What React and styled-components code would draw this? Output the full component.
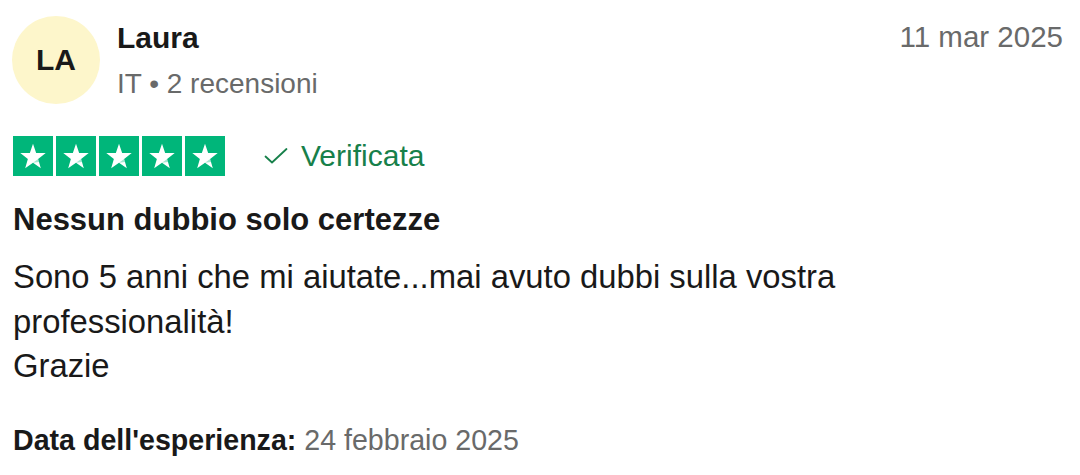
import React from 'react';
import styled, { createGlobalStyle } from 'styled-components';

const GlobalStyle = createGlobalStyle`
  html, body {
    margin: 0;
    padding: 0;
    background: #ffffff;
  }
  body {
    font-family: "Liberation Sans", Arial, Helvetica, sans-serif;
    color: #191919;
  }
`;

const Card = styled.article`
  width: 1080px;
  height: 475px;
  box-sizing: border-box;
  padding: 16px 17px 0 13px;
  display: flex;
  flex-direction: column;
`;

const Header = styled.header`
  display: flex;
  align-items: flex-start;
`;

const Avatar = styled.div`
  width: 88px;
  height: 88px;
  margin-left: -1px;
  border-radius: 50%;
  background: #fdf6cb;
  display: flex;
  align-items: center;
  justify-content: center;
  font-size: 30px;
  font-weight: 700;
  color: #191919;
  flex-shrink: 0;
`;

const Consumer = styled.div`
  display: flex;
  flex-direction: column;
  margin-left: 17px;
  flex: 1;
`;

const Name = styled.div`
  margin-top: 6px;
  font-size: 30px;
  line-height: 32px;
  font-weight: 700;
`;

const Meta = styled.div`
  margin-top: 14px;
  font-size: 28px;
  line-height: 32px;
  color: #696a6a;
`;

const PostedAt = styled.time`
  margin-top: 5px;
  font-size: 29.5px;
  line-height: 32px;
  color: #696a6a;
`;

const RatingRow = styled.div`
  display: flex;
  align-items: center;
  margin-top: 32px;
`;

const Stars = styled.div`
  display: flex;
  gap: 3px;
`;

const StarBox = styled.div`
  width: 40px;
  height: 40px;
  background: ${(p) => (p.$on ? '#00b67a' : '#dcdce6')};
  display: flex;
  align-items: center;
  justify-content: center;
`;

const Verified = styled.div`
  display: flex;
  align-items: center;
  margin-left: 39px;
  color: #17804a;
  font-size: 30px;
  line-height: 32px;
  gap: 13px;
`;

const Title = styled.h2`
  margin: 28px 0 0;
  font-size: 31px;
  line-height: 32px;
  font-weight: 700;
`;

const Body = styled.p`
  margin: 19px 0 0;
  font-size: 32.8px;
  line-height: 44.5px;
  max-width: 900px;
`;

const Experience = styled.p`
  margin: 35px 0 0;
  font-size: 28.6px;
  line-height: 32px;
  color: #696a6a;

  strong {
    color: #191919;
    font-weight: 700;
  }
`;

const Star = () => (
  <svg width="28" height="28" viewBox="0 0 24 24">
    <path
      d="M12 1.6 L14.7 9.4 L22.9 9.5 L16.4 14.5 L18.7 22.4 L12 17.7 L5.3 22.4 L7.6 14.5 L1.1 9.5 L9.3 9.4 Z"
      fill="#ffffff"
    />
    <path d="M16.4 14.5 L17.2 17.2 L12 17.7 Z" fill="#00b67a" opacity="0.35" />
  </svg>
);

const Check = () => (
  <svg width="24" height="18" viewBox="0 0 24 18">
    <path
      d="M1.5 9.5 L8 15.5 L22.5 2"
      fill="none"
      stroke="#17804a"
      strokeWidth="1.8"
      strokeLinecap="round"
      strokeLinejoin="round"
    />
  </svg>
);

const App = () => {
  const rating = 5;
  return (
    <>
      <GlobalStyle />
      <Card>
        <Header>
          <Avatar>LA</Avatar>
          <Consumer>
            <Name>Laura</Name>
            <Meta>IT • 2 recensioni</Meta>
          </Consumer>
          <PostedAt>11 mar 2025</PostedAt>
        </Header>

        <RatingRow>
          <Stars>
            {[1, 2, 3, 4, 5].map((n) => (
              <StarBox key={n} $on={n <= rating}>
                <Star />
              </StarBox>
            ))}
          </Stars>
          <Verified>
            <Check />
            Verificata
          </Verified>
        </RatingRow>

        <Title>Nessun dubbio solo certezze</Title>
        <Body>
          Sono 5 anni che mi aiutate...mai avuto dubbi sulla vostra
          <br />
          professionalità!
          <br />
          Grazie
        </Body>

        <Experience>
          <strong>Data dell'esperienza:</strong> 24 febbraio 2025
        </Experience>
      </Card>
    </>
  );
};

export default App;
